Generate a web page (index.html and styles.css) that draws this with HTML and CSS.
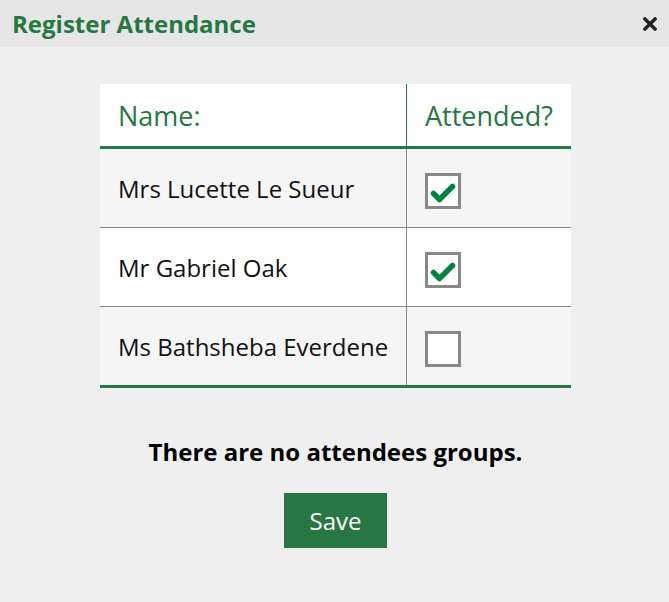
FILE: index.html
```html
<!DOCTYPE html>
<html>
<head>
<meta charset="utf-8">
<link rel="stylesheet" href="styles.css">
</head>
<body>
<div class="dialog">
  <div class="titlebar">
    <h1 class="title">Register Attendance</h1>
    <button class="close" aria-label="Close">
      <svg width="14" height="14" viewBox="0 0 14 14"><path d="M2 2 L12 12 M12 2 L2 12" stroke="#222" stroke-width="3.4" stroke-linecap="square"/></svg>
    </button>
  </div>
  <div class="content">
    <table class="att">
      <thead>
        <tr><th class="c-name">Name:</th><th class="c-att">Attended?</th></tr>
      </thead>
      <tbody>
        <tr class="odd"><td class="c-name">Mrs Lucette Le Sueur</td><td class="c-att"><span class="cb"><svg width="30" height="30" viewBox="0 0 30 30"><path d="M5.5 17.5 L11.5 23.5 L24.5 10.5" fill="none" stroke="#00843d" stroke-width="5.5" stroke-linecap="round" stroke-linejoin="round"/></svg></span></td></tr>
        <tr><td class="c-name">Mr Gabriel Oak</td><td class="c-att"><span class="cb"><svg width="30" height="30" viewBox="0 0 30 30"><path d="M5.5 17.5 L11.5 23.5 L24.5 10.5" fill="none" stroke="#00843d" stroke-width="5.5" stroke-linecap="round" stroke-linejoin="round"/></svg></span></td></tr>
        <tr class="odd"><td class="c-name">Ms Bathsheba Everdene</td><td class="c-att"><span class="cb"></span></td></tr>
      </tbody>
    </table>
    <p class="empty">There are no attendees groups.</p>
    <button class="save">Save</button>
  </div>
</div>
</body>
</html>
```
FILE: styles.css
```css
html, body { margin: 0; padding: 0; }
body {
  background: #efefef;
  font-family: "Open Sans", "Noto Sans", sans-serif;
  width: 669px;
  height: 602px;
  overflow: hidden;
}
.titlebar {
  height: 47px;
  background: #e6e6e6;
  display: flex;
  align-items: center;
  justify-content: space-between;
  padding: 0 12px 0 12px;
}
.title {
  margin: 0;
  font-size: 24px;
  font-weight: 700;
  color: #267742;
}
.close {
  border: 0;
  background: transparent;
  padding: 0;
  width: 14px;
  height: 14px;
  display: flex;
}
.content {
  display: flex;
  flex-direction: column;
  align-items: center;
  padding: 37px 0 0 2px;
}
.att {
  width: 471px;
  border-collapse: collapse;
  border-bottom: 3px solid #267742;
}
.att th {
  background: #fff;
  color: #267742;
  font-weight: 400;
  font-size: 27px;
  text-align: left;
  height: 62px;
  padding: 0 0 0 18px;
  border-bottom: 3px solid #267742;
}
.att th.c-att {
  border-left: 1px solid #267742;
}
.att td {
  font-size: 24px;
  color: #111;
  height: 78px;
  padding: 0 0 0 18px;
  border-top: 1px solid #888;
}
.att tbody tr:first-child td { border-top: 0; }
.att td.c-att { border-left: 1px solid #888; }
.att .c-name { width: 288px; }
.att tr { background: #fff; }
.att tr.odd { background: #f5f5f5; }
.cb {
  display: block;
  box-sizing: border-box;
  width: 36px;
  height: 36px;
  margin-top: 6px;
  border: 3px solid #888;
  background: #fff;
}
.cb svg { display: block; }
.empty {
  margin: 47px 0 0 0;
  font-size: 24px;
  font-weight: 700;
  color: #000;
}
.save {
  margin-top: 25px;
  width: 103px;
  height: 55px;
  border: 0;
  background: #267742;
  color: #fff;
  font-family: "Open Sans", sans-serif;
  font-size: 24px;
}
```
